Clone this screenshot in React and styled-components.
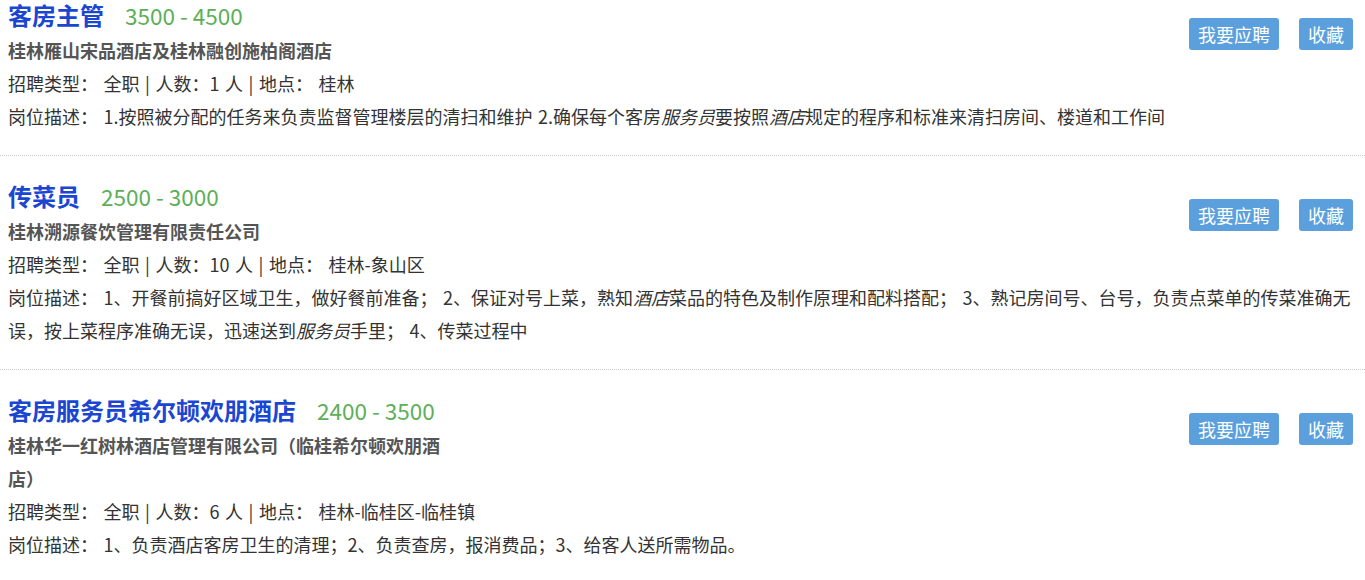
import React from 'react'
import styled, {createGlobalStyle} from 'styled-components'

const Global = createGlobalStyle`
    html, body {
        margin:0;
        padding:0;
        background:#fff;
    }
    body {
        font-family:"Noto Sans CJK SC", "Noto Sans", sans-serif;
        color:#333;
        overflow:hidden;
    }
`

const List = styled.div`
    width:1365px;
`

const Item = styled.div`
    padding:25px 12px 22px 8px;
    border-bottom:1px dotted #ccc;
    &:first-child {
        padding-top:0;
    }
`

const Top = styled.div`
    display:flex;
    align-items:flex-start;
`

const Head = styled.div`
    flex:1;
`

const TitleRow = styled.div`
    display:flex;
    align-items:baseline;
    height:30px;
    line-height:30px;
    white-space:nowrap;
`

const Title = styled.a`
    font-size:24px;
    font-weight:bold;
    color:#1a46d2;
    text-decoration:none;
`

const Salary = styled.span`
    margin-left:21px;
    font-size:22.5px;
    color:#5caf57;
`

const Company = styled.div`
    margin-top:4px;
    max-width:440px;
    font-size:18px;
    font-weight:bold;
    line-height:33px;
    color:#555;
`

const Actions = styled.div`
    display:flex;
    gap:20px;
    margin-top:18px;
`

const Button = styled.button`
    height:32px;
    padding:0 9px;
    border:none;
    border-radius:3px;
    background:#5b9fdc;
    color:#fff;
    font-family:inherit;
    font-size:18px;
    line-height:32px;
    cursor:pointer;
`

const Line = styled.div`
    font-size:18px;
    line-height:33px;
    word-spacing:1.5px;
    color:#333;
`

const jobs = [
    {
        title:'客房主管',
        salary:'3500 - 4500',
        company:'桂林雁山宋品酒店及桂林融创施柏阁酒店',
        count:'1',
        place:'桂林',
        desc:<>1.按照被分配的任务来负责监督管理楼层的清扫和维护 2.确保每个客房<em>服务员</em>要按照<em>酒店</em>规定的程序和标准来清扫房间、楼道和工作间</>
    },
    {
        title:'传菜员',
        salary:'2500 - 3000',
        company:'桂林溯源餐饮管理有限责任公司',
        count:'10',
        place:'桂林-象山区',
        desc:<>1、开餐前搞好区域卫生，做好餐前准备； 2、保证对号上菜，熟知<em>酒店</em>菜品的特色及制作原理和配料搭配； 3、熟记房间号、台号，负责点菜单的传菜准确无误，按上菜程序准确无误，迅速送到<em>服务员</em>手里； 4、传菜过程中</>
    },
    {
        title:'客房服务员希尔顿欢朋酒店',
        salary:'2400 - 3500',
        company:'桂林华一红树林酒店管理有限公司（临桂希尔顿欢朋酒店）',
        count:'6',
        place:'桂林-临桂区-临桂镇',
        desc:<>1、负责酒店客房卫生的清理；2、负责查房，报消费品；3、给客人送所需物品。</>
    }
]

const Job = ({job}) => (
    <Item>
        <Top>
            <Head>
                <TitleRow>
                    <Title href="#">{job.title}</Title>
                    <Salary>{job.salary}</Salary>
                </TitleRow>
                <Company>{job.company}</Company>
            </Head>
            <Actions>
                <Button>我要应聘</Button>
                <Button>收藏</Button>
            </Actions>
        </Top>
        <Line>
            招聘类型： 全职 | 人数：{job.count} 人 | 地点： {job.place}
        </Line>
        <Line>
            岗位描述： {job.desc}
        </Line>
    </Item>
)

const App = () => (
    <>
        <Global/>
        <List>
            {jobs.map(j => <Job key={j.title} job={j}/>)}
        </List>
    </>
)

export default App
